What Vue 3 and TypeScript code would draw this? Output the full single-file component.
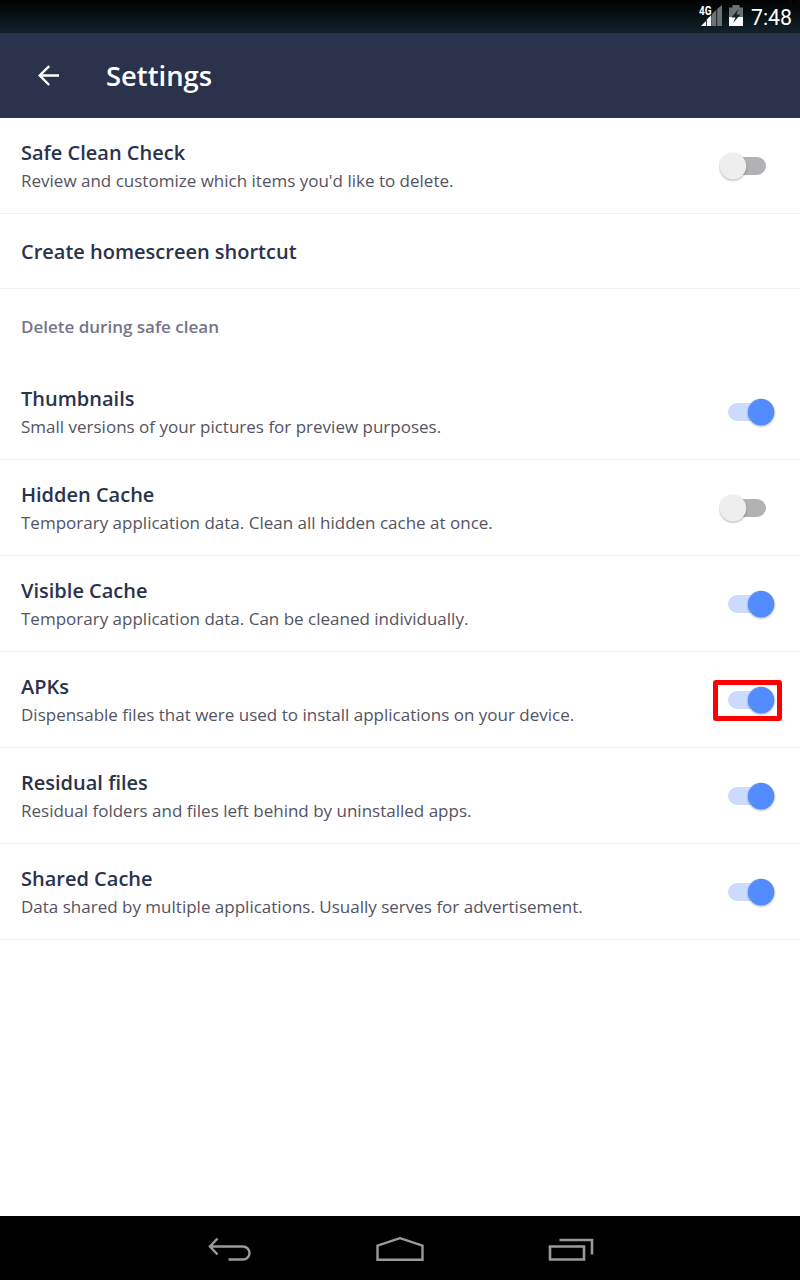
<script setup lang="ts">
interface Setting {
  title: string
  detail?: string
  on?: boolean
  marked?: boolean
}

const general: Setting[] = [
  { title: 'Safe Clean Check', detail: "Review and customize which items you'd like to delete.", on: false },
  { title: 'Create homescreen shortcut' },
]

const cleaned: Setting[] = [
  { title: 'Thumbnails', detail: 'Small versions of your pictures for preview purposes.', on: true },
  { title: 'Hidden Cache', detail: 'Temporary application data. Clean all hidden cache at once.', on: false },
  { title: 'Visible Cache', detail: 'Temporary application data. Can be cleaned individually.', on: true },
  { title: 'APKs', detail: 'Dispensable files that were used to install applications on your device.', on: true, marked: true },
  { title: 'Residual files', detail: 'Residual folders and files left behind by uninstalled apps.', on: true },
  { title: 'Shared Cache', detail: 'Data shared by multiple applications. Usually serves for advertisement.', on: true },
]

const groups = [
  { label: '', items: general },
  { label: 'Delete during safe clean', items: cleaned },
]
</script>

<template>
  <div class="screen">
    <div class="status">
      <svg class="signal" width="24" height="24" viewBox="0 0 24 24">
        <path d="M14 10l4.300-4.300V22H14zM19.200 5L24 1v21h-4.800z" fill="#6b7274" />
        <path d="M8.800 15.500l4.500-4.500v11H8.800z" fill="#fff" />
        <path d="M3 22l5-5v5z" fill="#fff" />
        <text transform="translate(1 11) scale(0.8 1)" x="0" y="0">4G</text>
      </svg>
      <svg class="battery" width="14" height="22" viewBox="0 0 14 22">
        <path d="M3.500 0h7v2.500H14V12H0V2.500h3.500z" fill="#6b7274" />
        <path d="M0 12h14v9H0z" fill="#fff" />
        <path d="M9.500 4L2.500 12.500h4L4 18l7.500-8.500h-4z" fill="#15242a" />
      </svg>
      <span class="clock">7:48</span>
    </div>

    <header class="bar">
      <svg class="back" width="24" height="24" viewBox="0 0 24 24">
        <path d="M13.200 2.200L3.700 11.500l9.500 9.500M3.700 11.500H23" fill="none" stroke="#fff" stroke-width="2.400" />
      </svg>
      <h1>Settings</h1>
    </header>

    <main>
      <section v-for="group in groups" :key="group.label">
        <h2 v-if="group.label">{{ group.label }}</h2>
        <div v-for="item in group.items" :key="item.title" class="row" :class="{ short: !item.detail }">
          <div class="text">
            <div class="title">{{ item.title }}</div>
            <div v-if="item.detail" class="detail">{{ item.detail }}</div>
          </div>
          <div v-if="item.on !== undefined" class="switch" :class="{ on: item.on }">
            <svg width="60" height="54" viewBox="0 0 60 54">
              <rect class="track" x="9" y="18" width="38" height="18" rx="9" />
              <circle class="thumb" :cx="item.on ? 42.1 : 14" cy="27.100" r="13.300" />
            </svg>
            <span v-if="item.marked" class="mark"></span>
          </div>
        </div>
      </section>
    </main>

    <nav class="nav">
      <svg width="44" height="26" viewBox="0 0 44 26">
        <path d="M9.500 1.500L2 9.500l7.500 8M2 9.500h33a6.500 6.500 0 0 1 0 13H20.500" fill="none" stroke="#999" stroke-width="2.500" />
      </svg>
      <svg width="48" height="26" viewBox="0 0 48 26">
        <path d="M1.500 22.700V8.700L24 1.200l22.500 7.500v14z" fill="none" stroke="#999" stroke-width="2.400" />
      </svg>
      <svg width="46" height="26" viewBox="0 0 46 26">
        <path d="M2 9.500h34v13H2zM11.500 3h32.500v14.500" fill="none" stroke="#999" stroke-width="2.600" />
      </svg>
    </nav>
  </div>
</template>

<style>
body {
  margin: 0;
  background: #fff;
}
</style>

<style scoped>
.screen {
  width: 800px;
  height: 1280px;
  display: flex;
  flex-direction: column;
  background: #fff;
  font-family: "Open Sans", sans-serif;
  overflow: hidden;
}
.status {
  height: 33px;
  box-sizing: border-box;
  flex: none;
  display: flex;
  align-items: flex-start;
  justify-content: flex-end;
  padding-right: 8px;
  background: linear-gradient(#000, #11232a);
}
.signal {
  margin: 4px 7px 0 0;
}
.signal text {
  font: 700 12.500px Roboto, sans-serif;
  fill: #fff;
}
.battery {
  margin: 5px 8px 0 0;
}
.clock {
  font: 400 21.300px/36px Roboto, sans-serif;
  color: #fff;
}
.bar {
  height: 85px;
  flex: none;
  display: flex;
  align-items: center;
  background: #2a334b;
}
.back {
  margin-left: 36px;
}
h1 {
  margin: 0 0 0 46px;
  font-size: 27.400px;
  line-height: 36px;
  font-weight: 600;
  color: #fff;
}
main {
  flex: 1;
}
h2 {
  margin: 0;
  height: 75px;
  padding-left: 21px;
  font-size: 17px;
  line-height: 75px;
  font-weight: 600;
  color: #74748a;
}
.row {
  height: 96px;
  box-sizing: border-box;
  display: flex;
  align-items: flex-start;
  justify-content: space-between;
  padding: 21px 21px 0;
  border-bottom: 1px solid #f2f2f4;
}
.row.short {
  height: 75px;
  padding-top: 24px;
}
.title {
  font-size: 20px;
  line-height: 28px;
  font-weight: 600;
  color: #2a334b;
}
.detail {
  font-size: 17px;
  line-height: 28px;
  color: #54535f;
  letter-spacing: 0.003px;
  white-space: nowrap;
}
.switch {
  position: relative;
  width: 60px;
  height: 54px;
}
.switch svg {
  display: block;
}
.track {
  fill: #b2b1b3;
}
.thumb {
  fill: #eee;
  filter: drop-shadow(0 1px 1px rgba(0, 0, 0, 0.3));
}
.on .track {
  fill: #cbdcff;
}
.on .thumb {
  fill: #528cff;
}
.mark {
  position: absolute;
  left: -6px;
  top: 7px;
  width: 59px;
  height: 31px;
  border: 5px solid #f00;
  border-radius: 3px;
}
.nav {
  height: 61px;
  flex: none;
  display: flex;
  align-items: center;
  justify-content: center;
  gap: 124px;
  padding: 3px 0 0 1px;
  background: #000;
}
</style>
